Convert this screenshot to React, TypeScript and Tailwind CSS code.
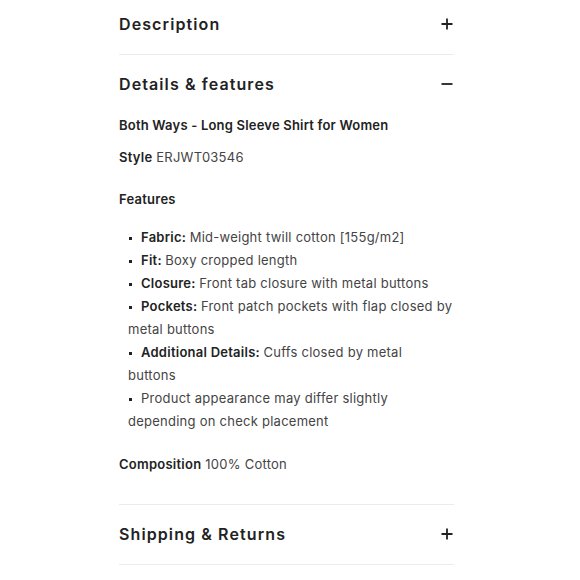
import React from "react";

function Plus() {
  return (
    <svg width="12" height="12" viewBox="0 0 12 12" className="text-[#222]">
      <path d="M6 0.5V11.5M0.5 6H11.5" stroke="currentColor" strokeWidth="1.8" />
    </svg>
  );
}
function Minus() {
  return (
    <svg width="12" height="12" viewBox="0 0 12 12" className="text-[#222]">
      <path d="M0.5 6H11.5" stroke="currentColor" strokeWidth="1.8" />
    </svg>
  );
}

function Header({ title, open }: { title: string; open?: boolean }) {
  return (
    <div className="flex h-[60px] items-center justify-between">
      <span className="text-[16px] font-semibold tracking-[1.1px] text-[#222]">{title}</span>
      <span className="mr-[1px]">{open ? <Minus /> : <Plus />}</span>
    </div>
  );
}

const items: [string, string, string?][] = [
  ["Fabric:", "Mid-weight twill cotton [155g/m2]"],
  ["Fit:", "Boxy cropped length"],
  ["Closure:", "Front tab closure with metal buttons"],
  ["Pockets:", "Front patch pockets with flap closed by metal buttons"],
  ["Additional Details:", "Cuffs closed by metal", "buttons"],
  ["", "Product appearance may differ slightly depending on check placement"],
];

export default function App() {
  return (
    <div
      className="min-h-[580px] bg-white"
      style={{ fontFamily: "Inter, 'Noto Sans', sans-serif" }}
    >
      <div className="ml-[119px] w-[335px] -mt-[6px]">
        <Header title="Description" />
        <div className="h-px bg-[#ececec]" />
        <div className="-mt-[1px]">
          <Header title="Details & features" open />
        </div>
        <div className="text-[13px] leading-[23px] tracking-[0.25px] text-[#444]">
          <div className="font-semibold text-[#222] tracking-[0.2px]">Both Ways - Long Sleeve Shirt for Women</div>
          <div className="mt-[9px]">
            <span className="font-semibold text-[#222]">Style</span> ERJWT03546
          </div>
          <div className="mt-[19px] font-semibold text-[#222]">Features</div>
          <ul className="mt-[15px] pl-[9px]">
            {items.map(([b, t, rest], i) => (
              <li key={i}>
                <span className="mr-[9px] ml-[1px] inline-block h-[3px] w-[3px] align-middle bg-[#222]" />
                {b && <span className="font-semibold text-[#222]">{b} </span>}
                {t}
                {rest && (
                  <>
                    <br />
                    {rest}
                  </>
                )}
              </li>
            ))}
          </ul>
          <div className="mt-[20px]">
            <span className="font-semibold text-[#222]">Composition</span> 100% Cotton
          </div>
        </div>
        <div className="mt-[28px] h-px bg-[#ececec]" />
        <div className="-mt-[1px]">
          <Header title="Shipping & Returns" />
        </div>
        <div className="h-px bg-[#ececec]" />
      </div>
    </div>
  );
}
